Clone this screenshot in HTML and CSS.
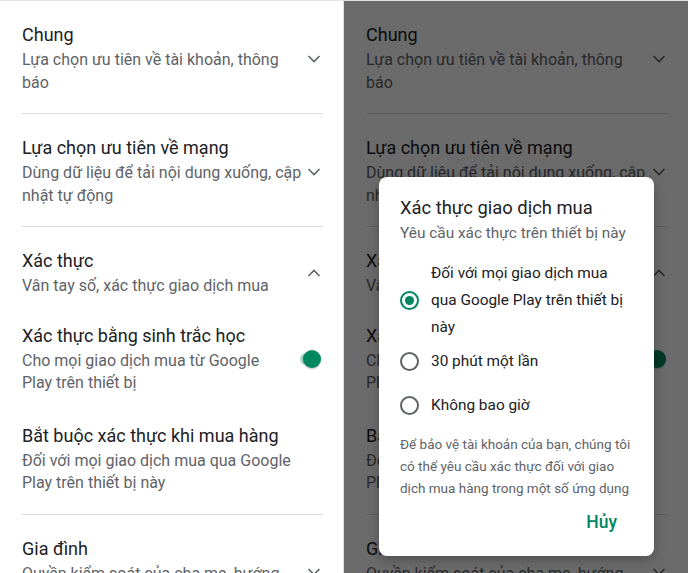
FILE: index.html
```html
<!DOCTYPE html>
<html lang="vi">
<head>
<meta charset="utf-8">
<link rel="stylesheet" href="styles.css">
</head>
<body>
<div class="screen">
  <div class="panel">
    <div class="list">
      <div class="section first">
        <div class="item">
          <div class="text">
            <div class="title">Chung</div>
            <div class="sub">Lựa chọn ưu tiên về tài khoản, thông<br>báo</div>
          </div>
          <div class="icon"><svg width="14" height="8" viewBox="0 0 14 8"><polyline points="1.5,1 7,6.5 12.5,1" fill="none" stroke="#5f6368" stroke-width="1.6"/></svg></div>
        </div>
      </div>
      <div class="divider"></div>
      <div class="section">
        <div class="item">
          <div class="text">
            <div class="title">Lựa chọn ưu tiên về mạng</div>
            <div class="sub">Dùng dữ liệu để tải nội dung xuống, cập<br>nhật tự động</div>
          </div>
          <div class="icon"><svg width="14" height="8" viewBox="0 0 14 8"><polyline points="1.5,1 7,6.5 12.5,1" fill="none" stroke="#5f6368" stroke-width="1.6"/></svg></div>
        </div>
      </div>
      <div class="divider"></div>
      <div class="section">
        <div class="item">
          <div class="text">
            <div class="title">Xác thực</div>
            <div class="sub">Vân tay số, xác thực giao dịch mua</div>
          </div>
          <div class="icon"><svg width="14" height="8" viewBox="0 0 14 8"><polyline points="1.5,7 7,1.5 12.5,7" fill="none" stroke="#5f6368" stroke-width="1.6"/></svg></div>
        </div>
        <div class="item">
          <div class="text">
            <div class="title">Xác thực bằng sinh trắc học</div>
            <div class="sub">Cho mọi giao dịch mua từ Google<br>Play trên thiết bị</div>
          </div>
          <div class="icon"><span class="toggle"><span class="thumb"></span></span></div>
        </div>
        <div class="item spaced">
          <div class="text">
            <div class="title">Bắt buộc xác thực khi mua hàng</div>
            <div class="sub">Đối với mọi giao dịch mua qua Google<br>Play trên thiết bị này</div>
          </div>
          <div class="icon"></div>
        </div>
      </div>
      <div class="divider"></div>
      <div class="section">
        <div class="item">
          <div class="text">
            <div class="title">Gia đình</div>
            <div class="sub">Quyền kiểm soát của cha mẹ, hướng<br>dẫn dành cho cha mẹ</div>
          </div>
          <div class="icon"><svg width="14" height="8" viewBox="0 0 14 8"><polyline points="1.5,1 7,6.5 12.5,1" fill="none" stroke="#5f6368" stroke-width="1.6"/></svg></div>
        </div>
      </div>
    </div>
  </div>

  <div class="panel dim">
    <div class="list">
      <div class="section first">
        <div class="item">
          <div class="text">
            <div class="title">Chung</div>
            <div class="sub">Lựa chọn ưu tiên về tài khoản, thông<br>báo</div>
          </div>
          <div class="icon"><svg width="14" height="8" viewBox="0 0 14 8"><polyline points="1.5,1 7,6.5 12.5,1" fill="none" stroke="#5f6368" stroke-width="1.6"/></svg></div>
        </div>
      </div>
      <div class="divider"></div>
      <div class="section">
        <div class="item">
          <div class="text">
            <div class="title">Lựa chọn ưu tiên về mạng</div>
            <div class="sub">Dùng dữ liệu để tải nội dung xuống, cập<br>nhật tự động</div>
          </div>
          <div class="icon"><svg width="14" height="8" viewBox="0 0 14 8"><polyline points="1.5,1 7,6.5 12.5,1" fill="none" stroke="#5f6368" stroke-width="1.6"/></svg></div>
        </div>
      </div>
      <div class="divider"></div>
      <div class="section">
        <div class="item">
          <div class="text">
            <div class="title">Xác thực</div>
            <div class="sub">Vân tay số, xác thực giao dịch mua</div>
          </div>
          <div class="icon"><svg width="14" height="8" viewBox="0 0 14 8"><polyline points="1.5,7 7,1.5 12.5,7" fill="none" stroke="#5f6368" stroke-width="1.6"/></svg></div>
        </div>
        <div class="item">
          <div class="text">
            <div class="title">Xác thực bằng sinh trắc học</div>
            <div class="sub">Cho mọi giao dịch mua từ Google<br>Play trên thiết bị</div>
          </div>
          <div class="icon"><span class="toggle"><span class="thumb"></span></span></div>
        </div>
        <div class="item spaced">
          <div class="text">
            <div class="title">Bắt buộc xác thực khi mua hàng</div>
            <div class="sub">Đối với mọi giao dịch mua qua Google<br>Play trên thiết bị này</div>
          </div>
          <div class="icon"></div>
        </div>
      </div>
      <div class="divider"></div>
      <div class="section">
        <div class="item">
          <div class="text">
            <div class="title">Gia đình</div>
            <div class="sub">Quyền kiểm soát của cha mẹ, hướng<br>dẫn dành cho cha mẹ</div>
          </div>
          <div class="icon"><svg width="14" height="8" viewBox="0 0 14 8"><polyline points="1.5,1 7,6.5 12.5,1" fill="none" stroke="#5f6368" stroke-width="1.6"/></svg></div>
        </div>
      </div>
    </div>
    <div class="scrim"></div>
    <div class="dialog">
      <div class="d-title">Xác thực giao dịch mua</div>
      <div class="d-sub">Yêu cầu xác thực trên thiết bị này</div>
      <div class="options">
        <div class="option opt1">
          <span class="radio on"></span>
          <span class="label">Đối với mọi giao dịch mua<br>qua Google Play trên thiết bị<br>này</span>
        </div>
        <div class="option opt2">
          <span class="radio"></span>
          <span class="label">30 phút một lần</span>
        </div>
        <div class="option opt3">
          <span class="radio"></span>
          <span class="label">Không bao giờ</span>
        </div>
      </div>
      <div class="note">Để bảo vệ tài khoản của bạn, chúng tôi<br>có thể yêu cầu xác thực đối với giao<br>dịch mua hàng trong một số ứng dụng<br>nhất định.</div>
      <div class="actions"><span class="btn">Hủy</span></div>
    </div>
  </div>
</div>
</body>
</html>
```

FILE: styles.css
```css
* { box-sizing: border-box; }
html, body { margin: 0; padding: 0; background: #fff; }
body { font-family: Roboto, "Noto Sans", Arial, sans-serif; color: #202124; }

.screen {
  display: flex;
  width: 688px;
  height: 573px;
  overflow: hidden;
}

.panel {
  position: relative;
  width: 344px;
  height: 573px;
  overflow: hidden;
  background: #fff;
  border-top: 1px solid #e3e3e3;
}
.panel:first-child { border-right: 1px solid #e0e0e0; }

.list {
  padding: 0 21px 0 22px;
}

.section {
  display: flex;
  flex-direction: column;
  gap: 26px;
  padding: 22px 0 19px;
}

.divider {
  height: 1px;
  background: #dadce0;
  margin-right: -1px;
}

.item {
  display: flex;
  align-items: center;
}
.item.spaced { margin-top: 3px; }
.text { flex: 1; min-width: 0; }
.title {
  font-size: 18px;
  line-height: 24px;
  color: #202124;
  white-space: nowrap;
}
.sub {
  font-size: 16px;
  line-height: 22.5px;
  margin-top: 2px;
  color: #5f6368;
  white-space: nowrap;
}
.icon {
  width: 22px;
  display: flex;
  justify-content: flex-end;
  align-items: center;
  flex-shrink: 0;
}
.icon svg { display: block; margin-right: 1px; }

.toggle {
  position: relative;
  display: block;
  width: 27px;
  height: 12px;
  border-radius: 6px;
  background: #a8d8c6;
  margin-right: 2px;
}
.thumb {
  position: absolute;
  right: -1px;
  top: -3px;
  width: 18px;
  height: 18px;
  border-radius: 50%;
  background: #01875f;
  box-shadow: 0 1px 2px rgba(0,0,0,0.25);
}

.scrim {
  position: absolute;
  inset: -1px 0 0 0;
  background: rgba(0, 0, 0, 0.58);
}

.dialog {
  position: absolute;
  left: 35px;
  top: 176px;
  width: 275px;
  height: 379px;
  background: #fff;
  border-radius: 8px;
  box-shadow: 0 4px 12px rgba(0,0,0,0.25);
  padding: 19px 0 0 21px;
  display: flex;
  flex-direction: column;
}
.d-title {
  font-size: 18.4px;
  line-height: 24px;
  color: #202124;
}
.d-sub {
  font-size: 15.4px;
  line-height: 22px;
  margin-top: 2px;
  color: #5f6368;
}

.options {
  display: flex;
  flex-direction: column;
  margin-top: 16px;
}
.option {
  display: flex;
  align-items: center;
}
.opt2 { margin-top: 7px; }
.opt3 { margin-top: 17px; }
.label {
  font-size: 15.4px;
  line-height: 27px;
  color: #202124;
  margin-left: 12px;
  white-space: nowrap;
}
.radio {
  width: 19px;
  height: 19px;
  border-radius: 50%;
  border: 2px solid #5f6368;
  flex-shrink: 0;
  display: flex;
  align-items: center;
  justify-content: center;
}
.radio.on { border-color: #01875f; }
.radio.on::after {
  content: "";
  width: 9px;
  height: 9px;
  border-radius: 50%;
  background: #01875f;
}

.note {
  margin-top: 14px;
  font-size: 13.5px;
  line-height: 22px;
  color: #5f6368;
  height: 69px;
  overflow: hidden;
  white-space: nowrap;
}

.actions {
  display: flex;
  justify-content: flex-end;
  padding-right: 37px;
  margin-top: 8px;
}
.btn {
  font-size: 17.5px;
  line-height: 24px;
  font-weight: 500;
  color: #01875f;
}
```
